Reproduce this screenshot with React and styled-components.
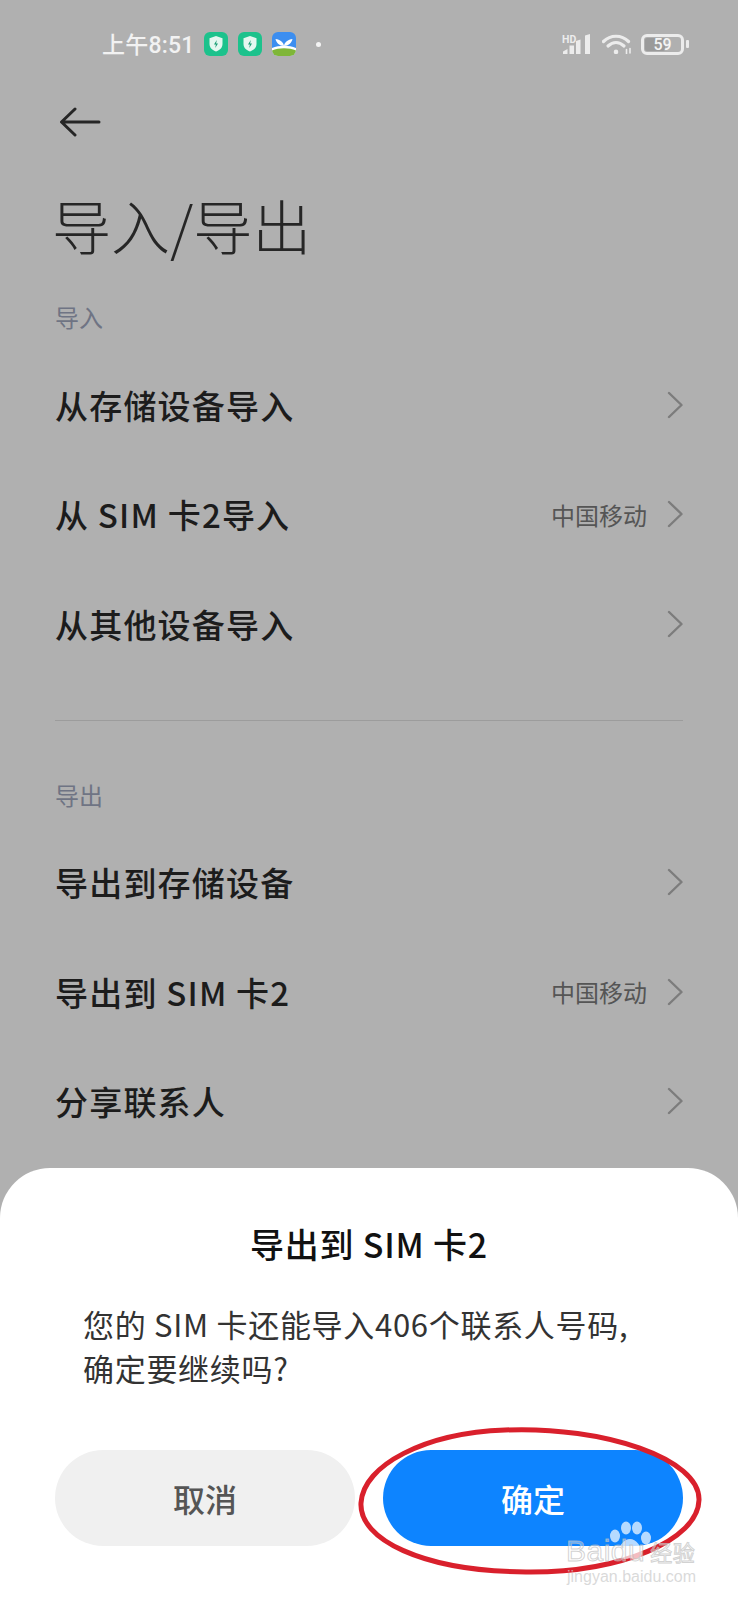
import React from "react";
import styled, { createGlobalStyle } from "styled-components";

const GlobalStyle = createGlobalStyle`
  html, body { margin: 0; padding: 0; }
  body { font-family: "Noto Sans CJK SC", "Noto Sans", sans-serif; }
`;

const Screen = styled.div`
  position: relative;
  width: 738px;
  height: 1600px;
  overflow: hidden;
  background: #b0b0b0;
`;

const StatusBar = styled.div`
  display: flex;
  align-items: center;
  height: 88px;
  padding-left: 102px;
  color: #f2f2f2;
`;

const Clock = styled.span`
  font-family: "Roboto", "Noto Sans CJK SC", sans-serif;
  font-size: 23px;
  font-weight: 500;
  letter-spacing: 0.2px;
  width: 102px;
  margin-top: -2px;
`;

const NoticeIcons = styled.div`
  display: flex;
  gap: 10px;
  align-items: center;
`;

const NoticeDot = styled.i`
  width: 5px;
  height: 5px;
  border-radius: 50%;
  margin-left: 20px;
  background: #f4f4f4;
`;

const StatusRight = styled.div`
  display: flex;
  align-items: center;
  margin-left: auto;
  margin-right: 54px;
  gap: 11px;
`;

const BatteryBox = styled.div`
  position: relative;
  width: 43px;
  height: 21px;
  margin-left: -2px;
  box-sizing: border-box;
  border: 3px solid #ececec;
  border-radius: 6px;
  display: flex;
  align-items: center;
  justify-content: center;
  font-family: "Roboto", sans-serif;
  font-size: 16px;
  font-weight: 500;
  color: #f4f4f4;
  &::before {
    content: "";
    position: absolute;
    left: 1px;
    top: 1px;
    bottom: 1px;
    width: 20px;
    background: #9a9a9a;
    border-radius: 2px;
  }
  &::after {
    content: "";
    position: absolute;
    right: -8px;
    top: 3.5px;
    width: 3px;
    height: 8px;
    background: #ececec;
    border-radius: 1px;
  }
  span { position: relative; }
`;

const BackRow = styled.div`
  height: 68px;
  padding-left: 59px;
  display: flex;
  align-items: center;
`;

const PageTitle = styled.h1`
  margin: 19px 0 0;
  padding-left: 52px;
  height: 99px;
  line-height: 99px;
  font-size: 59px;
  font-weight: 300;
  color: #262626;
`;

const SectionLabel = styled.div`
  padding-left: 55px;
  height: 34px;
  line-height: 34px;
  margin-top: ${(p) => p.$top}px;
  font-size: 24px;
  color: #6f7484;
`;

const Rows = styled.div`
  margin-top: 16px;
`;

const Row = styled.div`
  display: flex;
  align-items: center;
  height: 109.5px;
  padding: 0 55px;
`;

const RowName = styled.span`
  font-size: 33px;
  font-weight: 500;
  letter-spacing: 1.2px;
  color: #1c1c1c;
  white-space: pre;
`;

const RowValue = styled.span`
  margin-left: auto;
  margin-right: 20px;
  font-size: 24px;
  color: #555;
`;

const Chevron = styled.svg`
  margin-left: ${(p) => (p.$pushed ? "auto" : "0")};
  flex: none;
`;

const Divider = styled.hr`
  margin: 41px 55px 0;
  border: 0;
  height: 1px;
  background: #9c9c9c;
`;

const Sheet = styled.div`
  position: absolute;
  left: 0;
  right: 0;
  bottom: 0;
  height: 432px;
  box-sizing: border-box;
  background: #fff;
  border-radius: 50px 50px 0 0;
  padding: 51px 55px 0;
`;

const SheetTitle = styled.div`
  height: 50px;
  line-height: 50px;
  text-align: center;
  font-size: 34px;
  font-weight: 500;
  letter-spacing: 0.8px;
  color: #111;
  white-space: pre;
`;

const SheetBody = styled.p`
  margin: 33px 0 0 28px;
  font-size: 31px;
  letter-spacing: 0.7px;
  line-height: 44px;
  color: #333;
  white-space: pre;
`;

const Buttons = styled.div`
  display: flex;
  gap: 28px;
  margin-top: 60px;
`;

const SheetButton = styled.div`
  flex: 1;
  height: 96px;
  border-radius: 48px;
  display: flex;
  align-items: center;
  justify-content: center;
  font-size: 32px;
  font-weight: 500;
  background: ${(p) => (p.$primary ? "#0d84ff" : "#f0f0f0")};
  color: ${(p) => (p.$primary ? "#fff" : "#555")};
`;

const RedCircle = styled.svg`
  position: absolute;
  left: 355px;
  top: 1423px;
`;

const Watermark = styled.div`
  position: absolute;
  left: 566px;
  top: 1521px;
  width: 134px;
  height: 64px;
`;

const WatermarkPaw = styled.svg`
  position: absolute;
  left: 44px;
  top: 0;
`;

const WatermarkBrand = styled.div`
  position: absolute;
  left: 0;
  top: 12px;
  font-family: "Liberation Sans", sans-serif;
  font-size: 30px;
  line-height: 36px;
  white-space: nowrap;
  letter-spacing: 0.5px;
  color: rgba(255, 255, 255, 0.35);
  -webkit-text-stroke: 1px rgba(190, 190, 190, 0.7);
  span { font-family: "Noto Sans CJK SC", sans-serif; font-size: 22px; margin-left: 5px; }
`;

const WatermarkUrl = styled.div`
  position: absolute;
  left: 1px;
  top: 47px;
  font-family: "Liberation Sans", sans-serif;
  font-size: 16px;
  line-height: 18px;
  white-space: nowrap;
  color: rgba(205, 205, 205, 0.75);
`;

const ShieldBadge = () => (
  <svg width="24" height="24" viewBox="0 0 24 24">
    <rect width="24" height="24" rx="6" fill="#1cc28c" />
    <path d="M12 4l6.500 2.200v5.800c0 3.800-2.800 6.300-6.500 7.500-3.700-1.200-6.500-3.700-6.500-7.500V6.200z" fill="#e4f7f0" />
    <path d="M12.800 8l-2.800 4.500h1.900l-.7 3.500 2.800-4.500h-1.900z" fill="#1a9c74" />
  </svg>
);

const SproutBadge = () => (
  <svg width="24" height="24" viewBox="0 0 24 24">
    <defs>
      <clipPath id="sprout-clip"><rect width="24" height="24" rx="6" /></clipPath>
    </defs>
    <g clipPath="url(#sprout-clip)">
      <rect width="24" height="24" fill="#3c8ef0" />
      <path d="M0 16C7 13 17 13 24 16V24H0z" fill="#fff" />
      <path d="M0 18.500C7 15.500 17 15.500 24 18.500V24H0z" fill="#7fb638" />
      <path d="M12 14C11.500 10 8 7.500 3.500 7 4.500 11 7.500 14 12 14zM12 14c.5-4 4-6.500 8.500-7-1 4-4 7-8.500 7z" fill="#fff" />
    </g>
  </svg>
);

const SignalIcon = () => (
  <svg width="29" height="20" viewBox="0 0 29 20">
    <text x="0" y="8.500" fontFamily="Roboto, sans-serif" fontSize="10.500" fontWeight="700" fill="#ececec">HD</text>
    <path d="M1 20v-2.500l4.500-2.500v5zM7.500 20v-8.500h4.500V20zM14 20V7l4.500-1.500V20zM23 20V1.500L28 0v20z" fill="#ececec" />
  </svg>
);

const WifiIcon = () => (
  <svg width="30" height="20" viewBox="0 0 30 20" fill="none" stroke="#ececec" strokeWidth="3.200" strokeLinecap="round">
    <path d="M1.500 7.500C8.500 .5 19.500 .5 26.500 7.500" />
    <path d="M6 12C11 7.500 17 7.500 22 12" />
    <path d="M14 17.800v.2" strokeWidth="4.500" />
    <path d="M24.500 15.500v4.500M28 14.500v4.500" strokeWidth="1.600" />
  </svg>
);

const ArrowBack = () => (
  <svg width="42" height="30" viewBox="0 0 42 30" fill="none" stroke="#262626" strokeWidth="3" strokeLinecap="round" strokeLinejoin="round">
    <path d="M40 15H3M16 2L2.500 15 16 28" />
  </svg>
);

const RowChevron = ({ pushed }) => (
  <Chevron $pushed={pushed} width="16" height="28" viewBox="0 0 16 28" fill="none" stroke="#7c7c7c" strokeWidth="2.400" strokeLinecap="round" strokeLinejoin="round">
    <path d="M2 2l12.500 12L2 26" />
  </Chevron>
);

const ListRow = ({ name, value }) => (
  <Row>
    <RowName>{name}</RowName>
    {value && <RowValue>{value}</RowValue>}
    <RowChevron pushed={!value} />
  </Row>
);

export default function App() {
  return (
    <Screen>
      <GlobalStyle />
      <StatusBar>
        <Clock>上午8:51</Clock>
        <NoticeIcons>
          <ShieldBadge />
          <ShieldBadge />
          <SproutBadge />
        </NoticeIcons>
        <NoticeDot />
        <StatusRight>
          <SignalIcon />
          <WifiIcon />
          <BatteryBox><span>59</span></BatteryBox>
        </StatusRight>
      </StatusBar>
      <BackRow><ArrowBack /></BackRow>
      <PageTitle>导入/导出</PageTitle>
      <SectionLabel $top={26}>导入</SectionLabel>
      <Rows>
        <ListRow name="从存储设备导入" />
        <ListRow name="从 SIM 卡2导入" value="中国移动" />
        <ListRow name="从其他设备导入" />
      </Rows>
      <Divider />
      <SectionLabel $top={57}>导出</SectionLabel>
      <Rows>
        <ListRow name="导出到存储设备" />
        <ListRow name="导出到 SIM 卡2" value="中国移动" />
        <ListRow name="分享联系人" />
      </Rows>
      <Sheet>
        <SheetTitle>导出到 SIM 卡2</SheetTitle>
        <SheetBody>{"您的 SIM 卡还能导入406个联系人号码,\n确定要继续吗?"}</SheetBody>
        <Buttons>
          <SheetButton>取消</SheetButton>
          <SheetButton $primary>确定</SheetButton>
        </Buttons>
      </Sheet>
      <RedCircle width="350" height="154" viewBox="0 0 350 154" fill="none">
        <path d="M150 7C70 10 8 42 6 80c-2 36 60 68 165 69 95 1 172-32 173-72C345 36 250 3 150 7z" stroke="#d9202c" strokeWidth="5" />
      </RedCircle>
      <Watermark>
        <WatermarkPaw width="42" height="40" viewBox="0 0 42 40">
          <g fill="rgba(255,255,255,0.7)">
            <ellipse cx="5" cy="15" rx="5" ry="6.500" />
            <ellipse cx="16" cy="7" rx="5" ry="6.500" />
            <ellipse cx="27" cy="7" rx="5" ry="6.500" />
            <ellipse cx="36" cy="17" rx="5" ry="6.500" />
            <path d="M20 18c-6 0-12 8-12 14 0 6 7 7 12 5 5 2 12 1 12-5 0-6-6-14-12-14z" />
          </g>
        </WatermarkPaw>
        <WatermarkBrand>Baidu<span>经验</span></WatermarkBrand>
        <WatermarkUrl>jingyan.baidu.com</WatermarkUrl>
      </Watermark>
    </Screen>
  );
}
